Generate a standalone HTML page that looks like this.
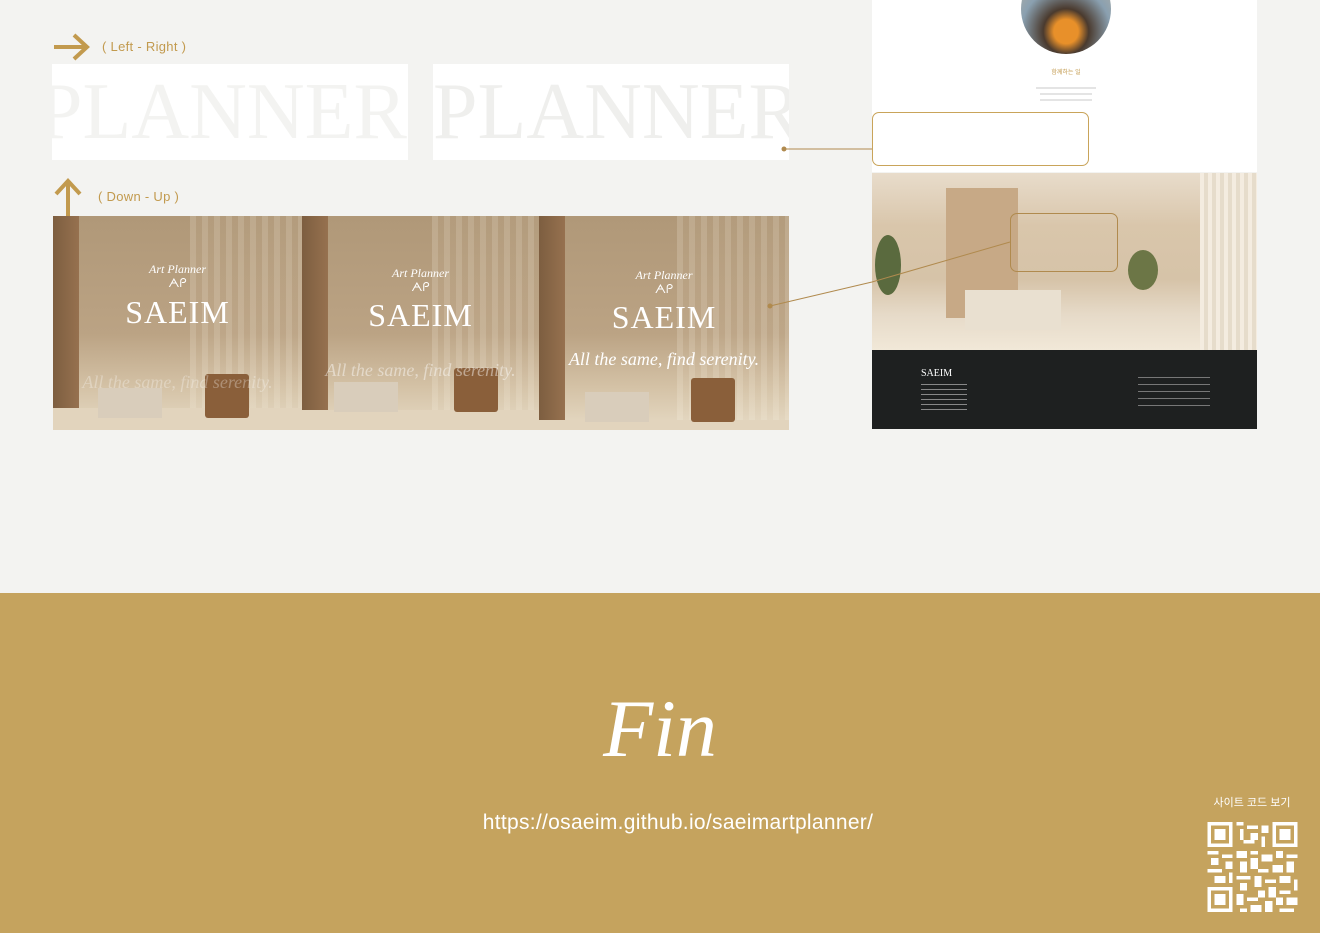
<!DOCTYPE html>
<html><head><meta charset="utf-8"><style>
*{margin:0;padding:0;box-sizing:border-box}
body{width:1320px;height:933px;position:relative;overflow:hidden;background:#f3f3f1;font-family:"Liberation Sans",sans-serif}
.a{position:absolute}
.lbl{color:#c29a4e;font-size:13px;letter-spacing:.3px}
.pl{background:#fff;overflow:hidden;font-family:"Liberation Serif",serif;font-size:80px;color:#f3f3f1;line-height:96px;white-space:nowrap;letter-spacing:0px}
.pan{overflow:hidden;background:linear-gradient(180deg,#b09878 0%,#bba384 55%,#d4c2a6 80%,#e6dac4 100%)}
.pan .pil{position:absolute;left:0;top:0;width:26px;height:100%;background:linear-gradient(90deg,#7d5e40,#96714f)}
.pan .cur{position:absolute;right:0;top:0;width:45%;height:100%;background:repeating-linear-gradient(90deg,rgba(255,250,238,.18) 0 6px,rgba(255,250,238,.04) 6px 12px)}
.pan .ap{position:absolute;width:100%;text-align:center;color:#fff;font-family:"Liberation Serif",serif;font-style:italic;font-size:12px}
.pan .sa{position:absolute;width:100%;text-align:center;color:#fff;font-family:"Liberation Serif",serif;font-size:32px;letter-spacing:1px}
.pan .tg{position:absolute;width:100%;text-align:center;font-family:"Liberation Serif",serif;font-style:italic;font-size:18px;white-space:nowrap}
.pan .desk{position:absolute;left:0;right:0;bottom:0;height:22px;background:#e2d4bd}
.pan .lap{position:absolute;width:64px;height:30px;background:#d9cdbb;bottom:12px}
.pan .ch{position:absolute;width:44px;height:44px;background:#8a5f3a;bottom:12px;border-radius:3px}
</style></head><body>
<svg class="a" style="left:52px;top:32px" width="40" height="30"><path d="M2 15H34M22 3L35 15L22 27" stroke="#c29a4e" stroke-width="4" fill="none"/></svg>
<div class="a lbl" style="left:102px;top:39px">( Left - Right )</div>
<svg class="a" style="left:53px;top:178px" width="32" height="38"><path d="M15 38V4M3 16L15 3L27 16" stroke="#c29a4e" stroke-width="4" fill="none"/></svg>
<div class="a lbl" style="left:98px;top:189px">( Down - Up )</div>
<div class="a pl" style="left:52px;top:64px;width:356px;height:96px"><span style="margin-left:-14px">PLANNER</span></div>
<div class="a pl" style="left:433px;top:64px;width:356px;height:96px;color:#efefed"><span>PLANNER</span></div>
<div class="a pan" style="left:53px;top:216px;width:249px;height:214px"><div class="pil"></div><div class="cur"></div>
<div class="ap" style="top:46px">Art Planner</div><div class="ap" style="top:60px;font-style:normal">ᗅᑭ</div><div class="sa" style="top:78px">SAEIM</div>
<div class="desk"></div><div class="lap" style="left:45px"></div><div class="ch" style="left:152px"></div>
<div class="tg" style="top:156px;color:rgba(255,255,255,.3)">All the same, find serenity.</div></div>
<div class="a pan" style="left:302px;top:216px;width:237px;height:214px"><div class="pil"></div><div class="cur"></div>
<div class="ap" style="top:50px">Art Planner</div><div class="ap" style="top:64px;font-style:normal">ᗅᑭ</div><div class="sa" style="top:81px">SAEIM</div>
<div class="desk" style="height:20px"></div><div class="lap" style="left:32px;bottom:18px"></div><div class="ch" style="left:152px;bottom:18px"></div>
<div class="tg" style="top:144px;color:rgba(255,255,255,.45)">All the same, find serenity.</div></div>
<div class="a pan" style="left:539px;top:216px;width:250px;height:214px"><div class="pil"></div><div class="cur"></div>
<div class="ap" style="top:52px">Art Planner</div><div class="ap" style="top:66px;font-style:normal">ᗅᑭ</div><div class="sa" style="top:83px">SAEIM</div>
<div class="desk" style="height:10px"></div><div class="lap" style="left:46px;bottom:8px"></div><div class="ch" style="left:152px;bottom:8px"></div>
<div class="tg" style="top:133px;color:#fff">All the same, find serenity.</div></div>
<div class="a" style="left:872px;top:0;width:385px;height:172px;background:#fff"></div>
<div class="a" style="left:1021px;top:-36px;width:90px;height:90px;border-radius:50%;background:radial-gradient(circle at 50% 75%,#e8902a 0 15%,#4a3a2e 28%,#8aa0b0 55%,#c8b8a0)"></div>
<div class="a" style="left:1040px;top:67px;width:52px;text-align:center;font-size:6px;color:#c29a4e;font-family:'Liberation Sans','Noto Sans CJK KR',sans-serif">함께하는 일</div>
<div class="a" style="left:1036px;top:87px;width:60px;height:2px;background:#e4e4e4"></div>
<div class="a" style="left:1040px;top:93px;width:52px;height:2px;background:#e4e4e4"></div>
<div class="a" style="left:1040px;top:99px;width:52px;height:2px;background:#e4e4e4"></div>
<div class="a" style="left:872px;top:112px;width:217px;height:54px;border:1.5px solid #c9a45a;border-radius:7px;background:#fff"></div>
<div class="a" style="left:872px;top:173px;width:385px;height:177px;background:linear-gradient(180deg,#e8dccb 0%,#d9c6ab 30%,#d6c3a8 60%,#e6dac8 80%,#f1e8d8 100%)"></div>
<div class="a" style="left:946px;top:188px;width:72px;height:130px;background:#c7a986"></div>
<div class="a" style="left:1200px;top:173px;width:57px;height:177px;background:repeating-linear-gradient(90deg,#f4ece0 0 4px,#e6dccb 4px 8px)"></div>
<div class="a" style="left:965px;top:290px;width:96px;height:40px;background:#e9e0d0"></div>
<div class="a" style="left:875px;top:235px;width:26px;height:60px;border-radius:50%;background:#5a6a3e"></div>
<div class="a" style="left:1128px;top:250px;width:30px;height:40px;border-radius:50%;background:#6c7646"></div>
<div class="a" style="left:1010px;top:213px;width:108px;height:59px;border:1.5px solid #b08a4e;border-radius:7px"></div>
<div class="a" style="left:872px;top:350px;width:385px;height:79px;background:#1e2020"></div>
<div class="a" style="left:921px;top:368px;color:#fff;font-family:'Liberation Serif',serif;font-size:10px">SAEIM</div>
<div class="a" style="left:921px;top:384px;width:46px;height:30px;background:repeating-linear-gradient(180deg,#888 0 1px,transparent 1px 5px)"></div>
<div class="a" style="left:1138px;top:377px;width:72px;height:32px;background:repeating-linear-gradient(180deg,#777 0 1px,transparent 1px 7px)"></div>
<svg class="a" style="left:0;top:0" width="1320" height="440"><path d="M784 149H872M770 306L872 282M872 282L1010 242" stroke="#b08a4e" stroke-width="1" fill="none"/><circle cx="784" cy="149" r="2.5" fill="#b08a4e"/><circle cx="770" cy="306" r="2.5" fill="#b08a4e"/></svg>
<div class="a" style="left:0;top:593px;width:1320px;height:340px;background:#c5a35e"></div>
<div class="a" style="left:0;top:682px;width:1320px;text-align:center;color:#fff;font-family:'Liberation Serif',serif;font-style:italic;font-size:82px">Fin</div>
<div class="a" style="left:18px;top:811px;width:1320px;text-align:center;color:#fff;font-size:21px;letter-spacing:.3px">https://osaeim.github.io/saeimartplanner/</div>
<div class="a" style="left:1196px;top:794px;width:112px;text-align:center;color:#fff;font-size:11px;font-family:'Liberation Sans','Noto Sans CJK KR',sans-serif">사이트 코드 보기</div>
<svg class="a" style="left:1207px;top:822px" width="91" height="90" viewBox="0 0 25 25" shape-rendering="crispEdges"><g fill="#fff">
<path d="M0 0h7v7h-7zM1 1v5h5v-5zM2 2h3v3h-3z" fill-rule="evenodd"/>
<path d="M18 0h7v7h-7zM19 1v5h5v-5zM20 2h3v3h-3z" fill-rule="evenodd"/>
<path d="M0 18h7v7h-7zM1 19v5h5v-5zM2 20h3v3h-3z" fill-rule="evenodd"/>
<rect x="8" y="0" width="2" height="1"/><rect x="11" y="1" width="3" height="1"/><rect x="9" y="2" width="1" height="3"/><rect x="12" y="3" width="2" height="2"/><rect x="15" y="1" width="2" height="2"/><rect x="10" y="5" width="3" height="1"/><rect x="15" y="4" width="1" height="3"/>
<rect x="0" y="8" width="3" height="1"/><rect x="4" y="9" width="3" height="1"/><rect x="1" y="10" width="2" height="2"/><rect x="5" y="11" width="2" height="2"/><rect x="0" y="13" width="4" height="1"/><rect x="2" y="15" width="3" height="2"/><rect x="6" y="14" width="1" height="3"/>
<rect x="8" y="8" width="3" height="2"/><rect x="12" y="8" width="2" height="1"/><rect x="15" y="9" width="3" height="2"/><rect x="19" y="8" width="2" height="2"/><rect x="22" y="9" width="3" height="1"/><rect x="9" y="11" width="2" height="3"/><rect x="12" y="10" width="2" height="3"/><rect x="18" y="12" width="3" height="2"/><rect x="22" y="11" width="2" height="3"/><rect x="14" y="13" width="3" height="1"/>
<rect x="8" y="15" width="4" height="1"/><rect x="13" y="15" width="2" height="3"/><rect x="16" y="16" width="3" height="1"/><rect x="20" y="15" width="3" height="2"/><rect x="24" y="16" width="1" height="3"/><rect x="9" y="17" width="2" height="2"/><rect x="17" y="18" width="2" height="3"/><rect x="20" y="19" width="3" height="1"/>
<rect x="8" y="20" width="2" height="3"/><rect x="11" y="21" width="3" height="1"/><rect x="14" y="19" width="2" height="2"/><rect x="12" y="23" width="3" height="2"/><rect x="16" y="22" width="2" height="3"/><rect x="19" y="21" width="2" height="2"/><rect x="22" y="21" width="3" height="2"/><rect x="20" y="24" width="4" height="1"/><rect x="9" y="24" width="2" height="1"/>
</g></svg>
</body></html>
